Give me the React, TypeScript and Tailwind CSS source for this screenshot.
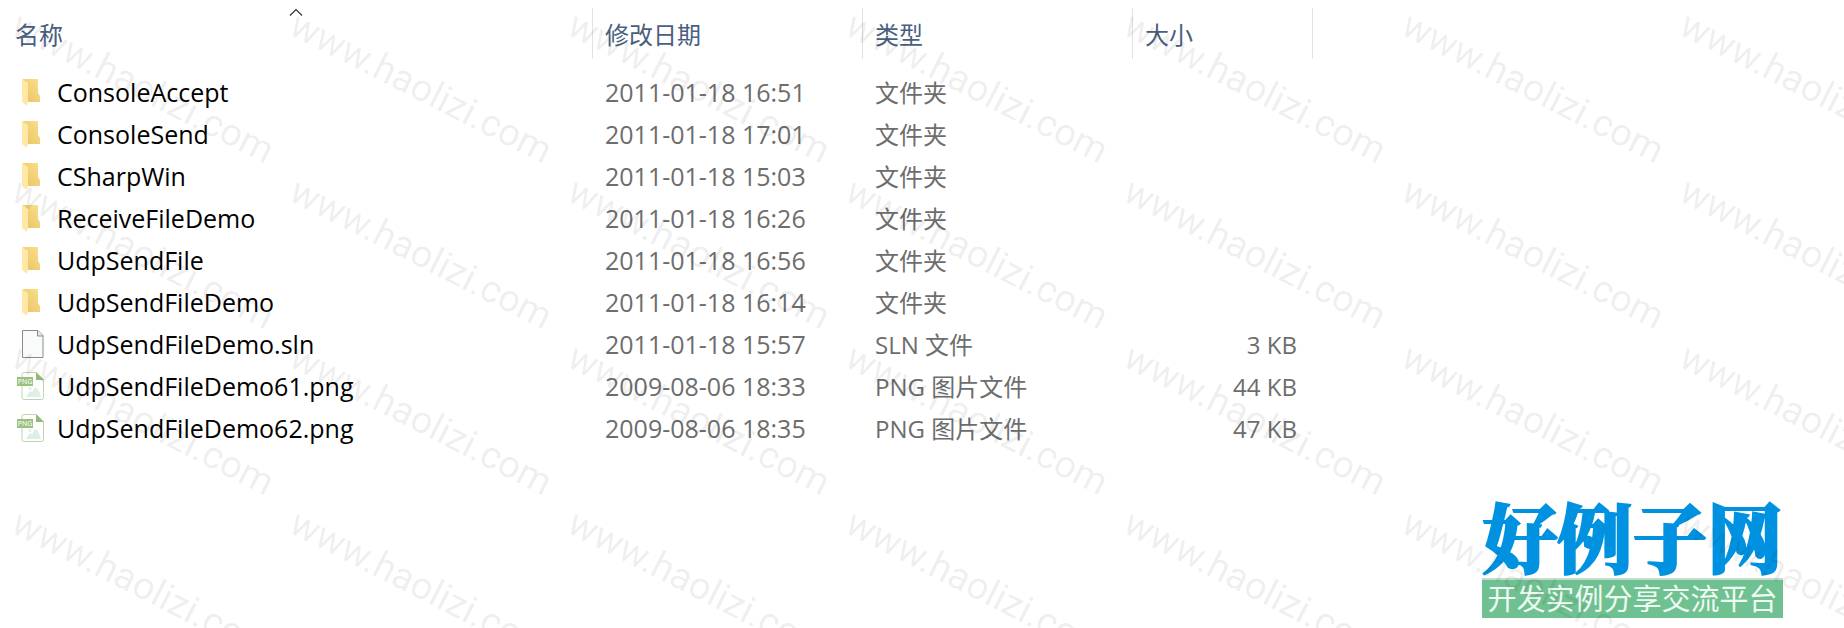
import React from 'react'

type FileKind = 'folder' | 'blank' | 'png'

interface FileEntry {
  name: string
  modified: string
  type: string
  size: string
  kind: FileKind
}

const files: FileEntry[] = [
  { name: 'ConsoleAccept', modified: '2011-01-18 16:51', type: '文件夹', size: '', kind: 'folder' },
  { name: 'ConsoleSend', modified: '2011-01-18 17:01', type: '文件夹', size: '', kind: 'folder' },
  { name: 'CSharpWin', modified: '2011-01-18 15:03', type: '文件夹', size: '', kind: 'folder' },
  { name: 'ReceiveFileDemo', modified: '2011-01-18 16:26', type: '文件夹', size: '', kind: 'folder' },
  { name: 'UdpSendFile', modified: '2011-01-18 16:56', type: '文件夹', size: '', kind: 'folder' },
  { name: 'UdpSendFileDemo', modified: '2011-01-18 16:14', type: '文件夹', size: '', kind: 'folder' },
  { name: 'UdpSendFileDemo.sln', modified: '2011-01-18 15:57', type: 'SLN 文件', size: '3 KB', kind: 'blank' },
  { name: 'UdpSendFileDemo61.png', modified: '2009-08-06 18:33', type: 'PNG 图片文件', size: '44 KB', kind: 'png' },
  { name: 'UdpSendFileDemo62.png', modified: '2009-08-06 18:35', type: 'PNG 图片文件', size: '47 KB', kind: 'png' },
]

const columns = ['名称', '修改日期', '类型', '大小']

const FolderIcon = () => (
  <svg width="28" height="28" viewBox="0 0 28 28" aria-hidden="true">
    <defs>
      <linearGradient id="folder-back" x1="0" y1="1" x2="1" y2="0">
        <stop offset="0" stopColor="#e9c261" />
        <stop offset="1" stopColor="#fbe08c" />
      </linearGradient>
    </defs>
    <path d="M6 1h15v14l2 3v6H6z" fill="url(#folder-back)" />
    <path d="M5 1l6 4v18l-1 5-5-4z" fill="#ffe8a6" />
  </svg>
)

const BlankFileIcon = () => (
  <svg width="28" height="28" viewBox="0 0 28 28" aria-hidden="true">
    <path d="M5.500.5h15.500l5 5v22H5.500z" fill="#f9fafa" stroke="#8b8b8b" />
    <path d="M20.500.5v5.500h5.500" fill="#e6e6e6" stroke="#8b8b8b" />
  </svg>
)

const PngFileIcon = () => (
  <svg width="28" height="28" viewBox="0 0 28 28" aria-hidden="true">
    <path
      d="M7 .5h12l7.500 7.500v17.500a2 2 0 0 1-2 2h-17.500a2 2 0 0 1-2-2v-23a2 2 0 0 1 2-2z"
      fill="#fff"
      stroke="#bfd5ae"
    />
    <path d="M19 0v8h8z" fill="#8fbc7c" />
    <path d="M9 25l4-6 2 1 3-5 3 2 2 5 1 3z" fill="#deefe5" />
    <circle cx="13" cy="16.500" r="1.500" fill="#deefe5" />
    <rect y="5" width="16" height="9" fill="#9bc17f" />
    <text
      x="8"
      y="12"
      textAnchor="middle"
      fontSize="7"
      fontFamily="'Noto Sans', sans-serif"
      fill="#fff"
    >
      PNG
    </text>
  </svg>
)

const icons = {
  folder: FolderIcon,
  blank: BlankFileIcon,
  png: PngFileIcon,
}

const FileRow = ({ file }: { file: FileEntry }) => {
  const Icon = icons[file.kind]
  return (
    <tr className="h-[42px] text-[#6d6d6d]">
      <td className="p-0 pb-0.5 pl-[17px]">
        <div className="flex items-center gap-3 text-black">
          <Icon />
          <span>{file.name}</span>
        </div>
      </td>
      <td className="p-0 pb-0.5 pl-3">{file.modified}</td>
      <td className="p-0 pl-3 text-2xl/8">{file.type}</td>
      <td className="p-0 pr-4 text-right text-2xl/8">{file.size}</td>
    </tr>
  )
}

const FileTable = () => (
  <table className="w-[1313px] table-fixed border-separate border-spacing-0 text-[25px]/8">
    <colgroup>
      <col className="w-[593px]" />
      <col className="w-[270px]" />
      <col className="w-[270px]" />
      <col className="w-[180px]" />
    </colgroup>
    <thead>
      <tr className="h-[51px]">
        {columns.map((column, i) => (
          <th
            key={column}
            scope="col"
            className="relative border-r border-[#e2e2e2] p-0 text-left font-normal"
          >
            <button
              type="button"
              className={`w-full pt-0.5 text-left text-2xl/8 text-[#4a6080] ${i === 0 ? 'pl-[15px]' : 'pl-3'}`}
            >
              {column}
            </button>
            {i === 0 && (
              <svg
                className="absolute top-0 left-1/2 -translate-x-1/2"
                width="15"
                height="8"
                viewBox="0 0 15 8"
                aria-hidden="true"
              >
                <path d="M1.500 7.500l6-6 6 6" fill="none" stroke="#333" strokeWidth="1.200" />
              </svg>
            )}
          </th>
        ))}
      </tr>
    </thead>
    <tbody className="before:block before:h-[13px]">
      {files.map((file) => (
        <FileRow key={file.name} file={file} />
      ))}
    </tbody>
  </table>
)

const SiteLogo = () => (
  <div className="flex w-[301px] flex-col">
    <span className="text-center font-['Noto_Serif_CJK_SC','Noto_Sans_CJK_SC',serif] text-[75px]/[86px] font-black whitespace-nowrap text-[#0092e0] [-webkit-text-stroke:2px_#0092e0]">
      好例子网
    </span>
    <span className="border-t-2 border-[#c3dccd] bg-[#70c191] text-center text-[29px]/[38px] whitespace-nowrap text-[#eefaf2]">
      开发实例分享交流平台
    </span>
  </div>
)

// repeated site address laid over the whole listing
const Watermark = () => (
  <div
    aria-hidden="true"
    className="pointer-events-none absolute inset-0 grid grid-cols-[repeat(7,278px)] auto-rows-[166px] overflow-hidden pt-1 pl-6"
  >
    {Array.from({ length: 28 }, (_, i) => (
      <span
        key={i}
        className="origin-top-left rotate-[27deg] font-['Roboto',Arial,sans-serif] text-[38px]/10 whitespace-nowrap text-black/7"
      >
        www.haolizi.com
      </span>
    ))}
  </div>
)

const App: React.FC = () => {
  return (
    <main className="relative min-h-screen overflow-hidden bg-white pt-2 pb-[10px] font-['Open_Sans','Noto_Sans_CJK_SC',sans-serif]">
      <FileTable />
      <div className="mt-[42px] flex justify-end pr-[61px]">
        <SiteLogo />
      </div>
      <Watermark />
    </main>
  )
}

export default App
